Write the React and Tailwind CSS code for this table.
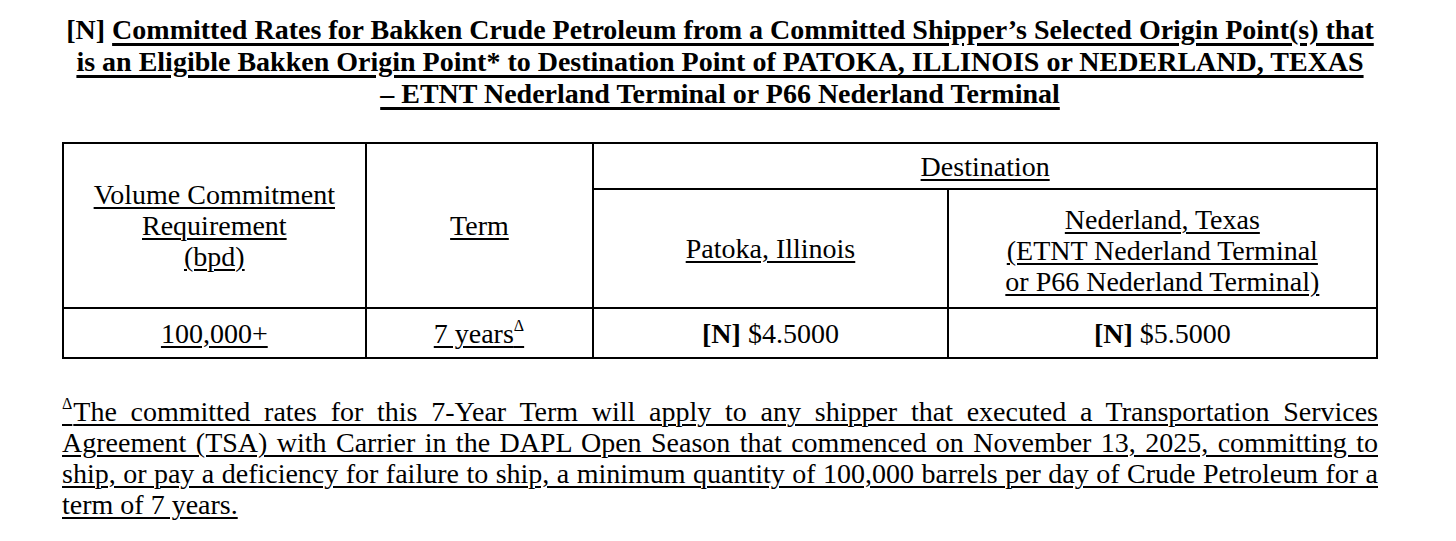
import React from 'react';

const serif = { fontFamily: '"Liberation Serif", "Times New Roman", serif' };

const U = ({ children }) => (
  <span className="underline decoration-[1.5px] underline-offset-[3px]">{children}</span>
);

const Delta = () => <span className="text-[16px] leading-none align-[12px] mr-[1px]">Δ</span>;

const App = () => (
  <div className="bg-white w-[1456px] h-[541px] text-black text-[28px] leading-[31px]" style={serif}>
    {/* Заголовок */}
    <h1 className="ml-[62px] w-[1316px] pt-[14px] text-center font-bold leading-[32px]">
      [N]{' '}
      <span className="underline decoration-[2.5px] underline-offset-[4px]">
        Committed Rates for Bakken Crude Petroleum from a Committed Shipper’s Selected Origin Point(s) that
        <br />
        is an Eligible Bakken Origin Point* to Destination Point of PATOKA, ILLINOIS or NEDERLAND, TEXAS
        <br />
        – ETNT Nederland Terminal or P66 Nederland Terminal
      </span>
    </h1>

    {/* Таблица ставок */}
    <table className="ml-[62px] mt-[32px] w-[1316px] border-collapse border-2 border-black text-center">
      <colgroup>
        <col className="w-[303px]" />
        <col className="w-[228px]" />
        <col className="w-[355px]" />
        <col className="w-[430px]" />
      </colgroup>
      <tbody>
        <tr className="h-[46px]">
          <td rowSpan={2} className="border-2 border-black align-middle">
            <U>Volume Commitment</U>
            <br />
            <U>Requirement</U>
            <br />
            <U>(bpd)</U>
          </td>
          <td rowSpan={2} className="border-2 border-black align-middle">
            <U>Term</U>
          </td>
          <td colSpan={2} className="border-2 border-black align-middle">
            <U>Destination</U>
          </td>
        </tr>
        <tr className="h-[119px]">
          <td className="border-2 border-black align-middle">
            <U>Patoka, Illinois</U>
          </td>
          <td className="border-2 border-black align-middle pt-[4px]">
            <U>Nederland, Texas</U>
            <br />
            <U>(ETNT Nederland Terminal</U>
            <br />
            <U>or P66 Nederland Terminal)</U>
          </td>
        </tr>
        <tr className="h-[50px]">
          <td className="border-2 border-black align-middle">
            <U>100,000+</U>
          </td>
          <td className="border-2 border-black align-middle">
            <U>
              7 years
              <Delta />
            </U>
          </td>
          <td className="border-2 border-black align-middle">
            <span className="font-bold">[N]</span> $4.5000
          </td>
          <td className="border-2 border-black align-middle">
            <span className="font-bold">[N]</span> $5.5000
          </td>
        </tr>
      </tbody>
    </table>

    {/* Примечание */}
    <p className="ml-[62px] mt-[37px] w-[1316px] text-justify">
      <U>
        <Delta />
        The committed rates for this 7-Year Term will apply to any shipper that executed a Transportation Services
        Agreement (TSA) with Carrier in the DAPL Open Season that commenced on November 13, 2025, committing to ship,
        or pay a deficiency for failure to ship, a minimum quantity of 100,000 barrels per day of Crude Petroleum for a
        term of 7 years.
      </U>
    </p>
  </div>
);

export default App;
